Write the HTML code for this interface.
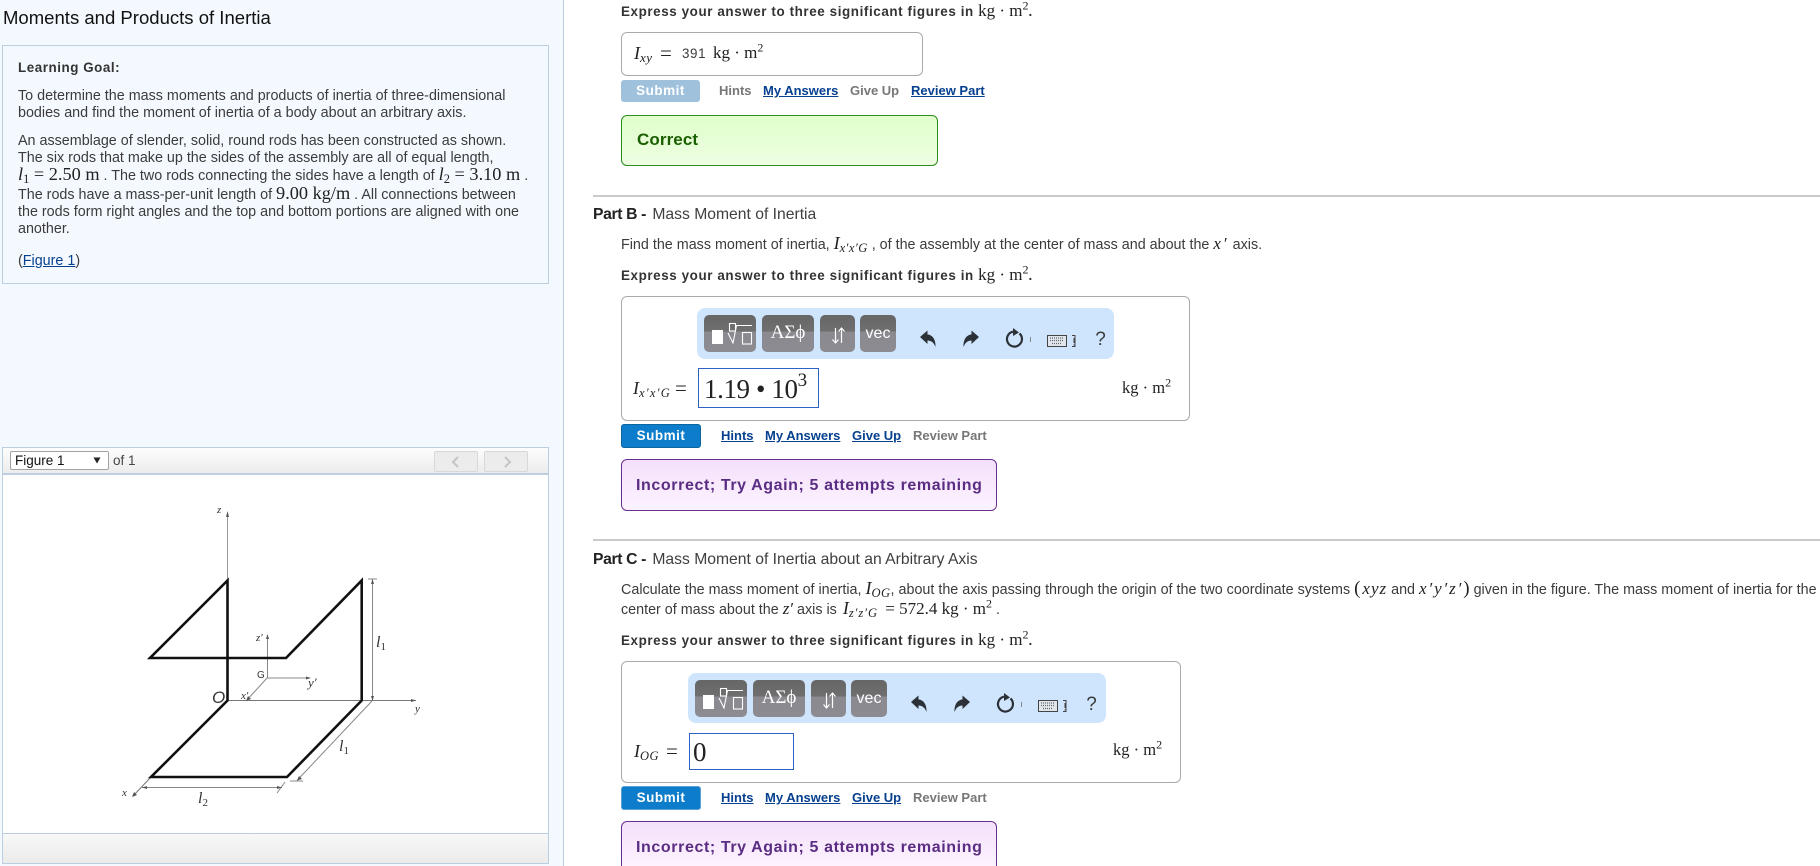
<!DOCTYPE html>
<html lang="en"><head><meta charset="utf-8"><title>Moments and Products of Inertia</title>
<style>
html,body{margin:0;padding:0;background:#fff;width:1820px;height:866px;overflow:hidden}
body{position:relative;font-family:"Liberation Sans",Arial,sans-serif;color:#3b3b3b}
.a{position:absolute;box-sizing:border-box}
.t{position:absolute;white-space:nowrap;font-size:14.33px;line-height:17px;height:17px;color:#3b3b3b}
.b{font-weight:bold;color:#333;letter-spacing:.6px;font-size:13.4px;line-height:18px}
.m{font-family:"Liberation Serif",serif;font-size:16.5px;color:#222;letter-spacing:0;font-weight:normal}
.v{font-family:"Liberation Serif",serif;font-style:italic;font-size:17px;color:#222;letter-spacing:0;font-weight:normal}
.L{font-size:18.3px}
sub,sup{font-size:72%;line-height:0}
sub.s{font-family:"Liberation Serif",serif;font-style:italic;font-size:12.5px;vertical-align:-3px;letter-spacing:.5px;color:#222}
sub.n{font-family:"Liberation Serif",serif;font-size:12.5px;vertical-align:-3px;color:#222}
a{color:#06408f;text-decoration:underline}
.l{position:absolute;white-space:nowrap;font-size:13px;font-weight:bold;line-height:16px;color:#777}
.l a{color:#06408f}
.hd{position:absolute;white-space:nowrap;font-size:15.7px;line-height:20px;color:#3f3f3f;letter-spacing:0}
.hd b{color:#222;letter-spacing:-.35px;margin-right:2px}
.btn{position:absolute;border-radius:3px;font-weight:bold;font-size:13.5px;color:#fff;text-align:center;letter-spacing:.5px;box-sizing:border-box}
.box{position:absolute;box-sizing:border-box;border:1px solid #aaa;border-radius:6px;background:#fff}
.pal{position:absolute;background:#cfe5fd;border-radius:8px;box-sizing:border-box}
.pb{position:absolute;top:7px;height:37px;border-radius:5px;background:linear-gradient(#666 0,#6f6f6f 45%,#8a8a90 45%,#8b8b91 100%);color:#fff;text-align:center}
.msg{position:absolute;box-sizing:border-box;border-radius:6px;font-weight:bold;font-size:16px;white-space:nowrap}
.inc{background:linear-gradient(#f3e0fb,#fdf3ff);border:1px solid #6a2f8e;color:#5a2d82;letter-spacing:.6px;padding-left:14px}
.in{position:absolute;box-sizing:border-box;border:1px solid #2f62c4;background:#fff;font-family:"Liberation Serif",serif;color:#222}
.q{position:absolute;white-space:nowrap;font-family:"Liberation Serif",serif;color:#222;line-height:20px;height:20px}
</style></head><body>

<!-- left panel -->
<div class="a" style="left:0;top:0;width:564px;height:866px;background:#f4f9ff;border-right:1px solid #b9cfe2"></div>
<div class="t" style="left:3px;top:8px;font-size:18.55px;line-height:20px;height:20px;color:#111">Moments and Products of Inertia</div>

<div class="a" style="left:2px;top:45px;width:547px;height:239px;border:1px solid #bccfe0"></div>
<div class="t" style="left:18px;top:59px;font-weight:bold;color:#333;letter-spacing:.55px;font-size:13.4px">Learning Goal:</div>
<div class="t" style="left:18px;top:88px">To determine the mass moments and products of inertia of three-dimensional</div>
<div class="t" style="left:18px;top:105px">bodies and find the moment of inertia of a body about an arbitrary axis.</div>
<div class="t" style="left:18px;top:133px">An assemblage of slender, solid, round rods has been constructed as shown.</div>
<div class="t" style="left:18px;top:150px">The six rods that make up the sides of the assembly are all of equal length,</div>
<div class="t" style="left:18px;top:166px"><span class="v L">l</span><sub class="n">1</sub><span class="m L"> = 2.50 m</span> . The two rods connecting the sides have a length of <span class="v L">l</span><sub class="n">2</sub><span class="m L"> = 3.10 m</span> .</div>
<div class="t" style="left:18px;top:185px">The rods have a mass-per-unit length of <span class="m L">9.00 kg/m</span> . All connections between</div>
<div class="t" style="left:18px;top:204px">the rods form right angles and the top and bottom portions are aligned with one</div>
<div class="t" style="left:18px;top:221px">another.</div>
<div class="t" style="left:18px;top:253px">(<a href="#">Figure 1</a>)</div>

<!-- figure toolbar -->
<div class="a" style="left:2px;top:447px;width:547px;height:27px;border:1px solid #bccfe0;background:linear-gradient(#fdfdfd,#ececec)"></div>
<div class="a" style="left:10px;top:451px;width:99px;height:19px;background:#fff;border:1px solid #a3a3a3;border-radius:2px"></div>
<div class="t" style="left:15px;top:452px;color:#111;font-size:13.5px">Figure 1</div>
<svg class="a" style="left:92px;top:457px" width="10" height="8"><path d="M1.500 0.500H8.500L5 6.500Z" fill="#222"/></svg>
<div class="t" style="left:113px;top:452px;color:#444;font-size:13.5px">of 1</div>
<div class="a" style="left:434px;top:451px;width:44px;height:21px;border:1px solid #d8d8d8;border-radius:2px;background:#ececec"></div>
<div class="a" style="left:484px;top:451px;width:44px;height:21px;border:1px solid #d8d8d8;border-radius:2px;background:#ececec"></div>
<svg class="a" style="left:434px;top:451px" width="94" height="21"><path d="M24 6L19 11L24 16M71 6L76 11L71 16" fill="none" stroke="#c4c4c4" stroke-width="2"/></svg>

<!-- figure -->
<div class="a" style="left:2px;top:474px;width:547px;height:360px;background:#fff;border:1px solid #bccfe0"></div>
<div class="a" style="left:2px;top:833px;width:547px;height:31px;border:1px solid #bccfe0;background:linear-gradient(#f8f8f8,#ebebeb)"></div>
<svg class="a" style="left:0;top:0;filter:blur(.35px)" width="564" height="866" font-family="Liberation Serif,serif" font-style="italic" fill="#333">
<g fill="none" stroke="#9a9a9a" stroke-width="1">
<path d="M227.500 580V514"/>
<path stroke="#777" d="M227 700.500H416M151 777L133 796"/>
<path stroke="#888" d="M372.500 579V700M368 579H377M372 701L297 780.500M290 781H303M142 787.500H282M285 782L277 793"/>
<path stroke="#888" d="M267.500 636V678H309M267 678L247 700"/>
</g>
<path d="M226 517L227.500 511L229 517ZM416 700.500L411 699V702ZM132 797L134 792L137 795ZM372.500 579L371 584H374ZM372.500 701L371 696H374ZM297 780.500L299 776L302 779ZM142 787.500L147 786V789ZM282 787.500L277 786V789ZM267.500 634L266 639H269ZM311 678L306 676.500V679.500ZM246 701L248 696L251 699Z" fill="#555"/>
<path d="M227.500 580.500V700.500L151 777H287L361.700 700.500V580.500L286 658H150L227.500 580.500Z" fill="none" stroke="#111" stroke-width="2.600" stroke-linejoin="miter"/>
<text x="217" y="513" font-size="11">z</text>
<text x="256" y="641" font-size="11">z′</text>
<text x="257" y="678" font-size="10" font-family="Liberation Sans,sans-serif" font-style="normal">G</text>
<text x="308" y="687" font-size="13">y′</text>
<text x="241" y="699" font-size="11">x′</text>
<text x="212" y="703" font-size="17" font-family="Liberation Sans,sans-serif">O</text>
<text x="415" y="712" font-size="11">y</text>
<text x="122" y="796" font-size="11">x</text>
<text x="376" y="647" font-size="16">l<tspan font-size="11" font-style="normal" dy="3">1</tspan></text>
<text x="339" y="751" font-size="16">l<tspan font-size="11" font-style="normal" dy="3">1</tspan></text>
<text x="198" y="803" font-size="16">l<tspan font-size="11" font-style="normal" dy="3">2</tspan></text>
</svg>

<!-- Part A tail -->
<div class="t b" style="left:621px;top:2px">Express your answer to three significant figures in <span class="m" style="font-size:17px">kg · m<sup style="font-size:12px">2</sup></span>.</div>
<div class="box" style="left:621px;top:32px;width:302px;height:44px"></div>
<div class="q" style="left:634px;top:43px;font-size:18px;font-style:italic">I<sub class="s" style="font-size:13px">xy</sub></div>
<div class="q" style="left:660px;top:43px;font-size:21px">=</div>
<div class="t" style="left:682px;top:45px;letter-spacing:.6px;font-size:13.4px">391</div>
<div class="q" style="left:713px;top:43px;font-size:17px">kg · m<sup style="font-size:12px">2</sup></div>
<div class="btn" style="left:621px;top:80px;width:79px;height:22px;background:#9fc1dc;line-height:22px">Submit</div>
<div class="l" style="left:719px;top:83px">Hints</div>
<div class="l" style="left:763px;top:83px"><a href="#">My Answers</a></div>
<div class="l" style="left:850px;top:83px">Give Up</div>
<div class="l" style="left:911px;top:83px"><a href="#">Review Part</a></div>
<div class="msg" style="left:621px;top:115px;width:317px;height:51px;background:linear-gradient(#dfffcb,#eefee2);border:1px solid #2c8c1e;color:#1a6000;font-size:17px;line-height:47px;padding-left:15px;letter-spacing:.1px">Correct</div>

<div class="a" style="left:593px;top:195px;width:1227px;height:2px;background:#cacaca"></div>
<div class="hd" style="left:593px;top:205px"><b>Part B -</b> Mass Moment of Inertia</div>
<div class="t" style="left:621px;top:235px">Find the mass moment of inertia, <span class="v" style="font-size:18px">I</span><sub class="s">x′x′G</sub> , of the assembly at the center of mass and about the <span class="v" style="letter-spacing:2px">x′</span> axis.</div>
<div class="t b" style="left:621px;top:266px">Express your answer to three significant figures in <span class="m" style="font-size:17px">kg · m<sup style="font-size:12px">2</sup></span>.</div>

<div class="box" style="left:621px;top:296px;width:569px;height:125px"></div>
<div class="pal" style="left:697px;top:308px;width:417px;height:51px">
 <div class="pb" style="left:7px;width:52px"><svg width="52" height="37" fill="none" stroke="#fff" stroke-width="1.100"><rect x="8" y="15" width="11" height="14" fill="#fff" stroke="none"/><rect x="25.500" y="8.500" width="6" height="7.500"/><path d="M24 18L29 28L32.500 10.500H48"/><rect x="38.500" y="17.500" width="9" height="11.500"/></svg></div>
 <div class="pb" style="left:65px;width:52px;font-family:'Liberation Serif',serif;font-size:19px;line-height:36px">ΑΣϕ</div>
 <div class="pb" style="left:123px;width:35px"><svg width="35" height="37" fill="none" stroke="#fff" stroke-width="1.200"><path d="M15.500 13V27.500M12.500 24.500L15.500 28L18.500 24.500M21.500 28V13.500M18.500 16.500L21.500 13L24.500 16.500"/></svg></div>
 <div class="pb" style="left:163px;width:36px;font-size:16px;line-height:38px">vec</div>
</div>
<svg class="a" style="left:697px;top:308px" width="417" height="51" fill="#2c3138" stroke="none">
 <path d="M223 29L230.500 22.500V26.500C234 26.500 239 30 238.500 39C237 35 234.500 32.500 230.500 32.500V36Z"/>
 <path d="M282 29L274.500 22.500V26.500C271 26.500 266 30 266.500 39C268 35 270.500 32.500 274.500 32.500V36Z"/>
 <path d="M322.500 25.500A7.500 7.500 0 1 1 316 23.700" fill="none" stroke="#2c3138" stroke-width="2.200"/><path d="M316 20L322 24.500L316 28Z"/>
 <rect x="333" y="29" width="1" height="5" fill="#888"/>
 <rect x="350.500" y="27.500" width="19" height="11" fill="#dfe6ee" stroke="#444"/>
 <path d="M353 30h14M353 32.500h14M355 35.500h10" stroke="#666" stroke-width="1.200" stroke-dasharray="1 1" fill="none"/>
 <path d="M375 27.500h3v11h-3M377 30v5M377 36.500v1" fill="none" stroke="#444"/>
 <text x="403.500" y="37" font-family="Liberation Sans,sans-serif" font-size="19" text-anchor="middle" fill="#3a3a3a" stroke="none">?</text>
</svg>
<div class="q" style="left:633px;top:378px;font-size:18px;font-style:italic">I<sub class="s" style="letter-spacing:1.3px">x′x′G</sub></div>
<div class="q" style="left:675px;top:378px;font-size:21px">=</div>
<div class="in" style="left:698px;top:368px;width:121px;height:40px;font-size:27px;line-height:40px;padding-left:5px;letter-spacing:-.4px;white-space:nowrap">1.19 • 10<sup style="font-size:19px;position:relative;top:-2px">3</sup></div>
<div class="q" style="left:1122px;top:378px;font-size:16.5px">kg · m<sup style="font-size:12px">2</sup></div>
<div class="btn" style="left:621px;top:424px;width:80px;height:24px;background:#0d7ccb;border:1px solid #0b659f;line-height:22px">Submit</div>
<div class="l" style="left:721px;top:428px"><a href="#">Hints</a></div>
<div class="l" style="left:765px;top:428px"><a href="#">My Answers</a></div>
<div class="l" style="left:852px;top:428px"><a href="#">Give Up</a></div>
<div class="l" style="left:913px;top:428px">Review Part</div>
<div class="msg inc" style="left:621px;top:459px;width:376px;height:52px;line-height:52px">Incorrect; Try Again; 5 attempts remaining</div>

<div class="a" style="left:593px;top:539px;width:1227px;height:2px;background:#cacaca"></div>
<div class="hd" style="left:593px;top:550px"><b>Part C -</b> Mass Moment of Inertia about an Arbitrary Axis</div>
<div class="t" style="left:621px;top:580px">Calculate the mass moment of inertia, <span class="v" style="font-size:18px">I</span><sub class="s">OG</sub>, about the axis passing through the origin of the two coordinate systems <span class="m" style="font-size:19px">(</span><span class="v" style="letter-spacing:1px;margin-left:2px">xyz</span> and <span class="v" style="letter-spacing:1.900px">x′y′z′</span><span class="m" style="font-size:19px">)</span> given in the figure. The mass moment of inertia for the</div>
<div class="t" style="left:621px;top:600px">center of mass about the <span class="v">z′</span> axis is <span class="v" style="font-size:18px;margin-left:2px">I</span><sub class="s" style="letter-spacing:1px">z′z′G</sub><span class="m" style="font-size:17px;margin-left:3px"> = 572.4 kg · m<sup style="font-size:12px">2</sup></span> .</div>
<div class="t b" style="left:621px;top:631px">Express your answer to three significant figures in <span class="m" style="font-size:17px">kg · m<sup style="font-size:12px">2</sup></span>.</div>

<div class="box" style="left:621px;top:661px;width:560px;height:122px"></div>
<div class="pal" style="left:688px;top:673px;width:418px;height:50px">
 <div class="pb" style="left:7px;width:52px"><svg width="52" height="37" fill="none" stroke="#fff" stroke-width="1.100"><rect x="8" y="15" width="11" height="14" fill="#fff" stroke="none"/><rect x="25.500" y="8.500" width="6" height="7.500"/><path d="M24 18L29 28L32.500 10.500H48"/><rect x="38.500" y="17.500" width="9" height="11.500"/></svg></div>
 <div class="pb" style="left:65px;width:52px;font-family:'Liberation Serif',serif;font-size:19px;line-height:36px">ΑΣϕ</div>
 <div class="pb" style="left:123px;width:35px"><svg width="35" height="37" fill="none" stroke="#fff" stroke-width="1.200"><path d="M15.500 13V27.500M12.500 24.500L15.500 28L18.500 24.500M21.500 28V13.500M18.500 16.500L21.500 13L24.500 16.500"/></svg></div>
 <div class="pb" style="left:163px;width:36px;font-size:16px;line-height:38px">vec</div>
</div>
<svg class="a" style="left:688px;top:673px" width="418" height="50" fill="#2c3138" stroke="none">
 <path d="M223 29L230.500 22.500V26.500C234 26.500 239 30 238.500 39C237 35 234.500 32.500 230.500 32.500V36Z"/>
 <path d="M282 29L274.500 22.500V26.500C271 26.500 266 30 266.500 39C268 35 270.500 32.500 274.500 32.500V36Z"/>
 <path d="M322.500 25.500A7.500 7.500 0 1 1 316 23.700" fill="none" stroke="#2c3138" stroke-width="2.200"/><path d="M316 20L322 24.500L316 28Z"/>
 <rect x="333" y="29" width="1" height="5" fill="#888"/>
 <rect x="350.500" y="27.500" width="19" height="11" fill="#dfe6ee" stroke="#444"/>
 <path d="M353 30h14M353 32.500h14M355 35.500h10" stroke="#666" stroke-width="1.200" stroke-dasharray="1 1" fill="none"/>
 <path d="M375 27.500h3v11h-3M377 30v5M377 36.500v1" fill="none" stroke="#444"/>
 <text x="403.500" y="37" font-family="Liberation Sans,sans-serif" font-size="19" text-anchor="middle" fill="#3a3a3a" stroke="none">?</text>
</svg>
<div class="q" style="left:634px;top:741px;font-size:18px;font-style:italic">I<sub class="s">OG</sub></div>
<div class="q" style="left:666px;top:741px;font-size:21px">=</div>
<div class="in" style="left:689px;top:733px;width:105px;height:37px;font-size:27px;line-height:37px;padding-left:3px">0</div>
<div class="q" style="left:1113px;top:740px;font-size:16.5px">kg · m<sup style="font-size:12px">2</sup></div>
<div class="btn" style="left:621px;top:786px;width:80px;height:24px;background:#0d7ccb;border:1px solid #5a9fd8;line-height:22px">Submit</div>
<div class="l" style="left:721px;top:790px"><a href="#">Hints</a></div>
<div class="l" style="left:765px;top:790px"><a href="#">My Answers</a></div>
<div class="l" style="left:852px;top:790px"><a href="#">Give Up</a></div>
<div class="l" style="left:913px;top:790px">Review Part</div>
<div class="msg inc" style="left:621px;top:821px;width:376px;height:45px;line-height:52px;border-bottom:0;border-radius:6px 6px 0 0;overflow:hidden">Incorrect; Try Again; 5 attempts remaining</div>
</body></html>
